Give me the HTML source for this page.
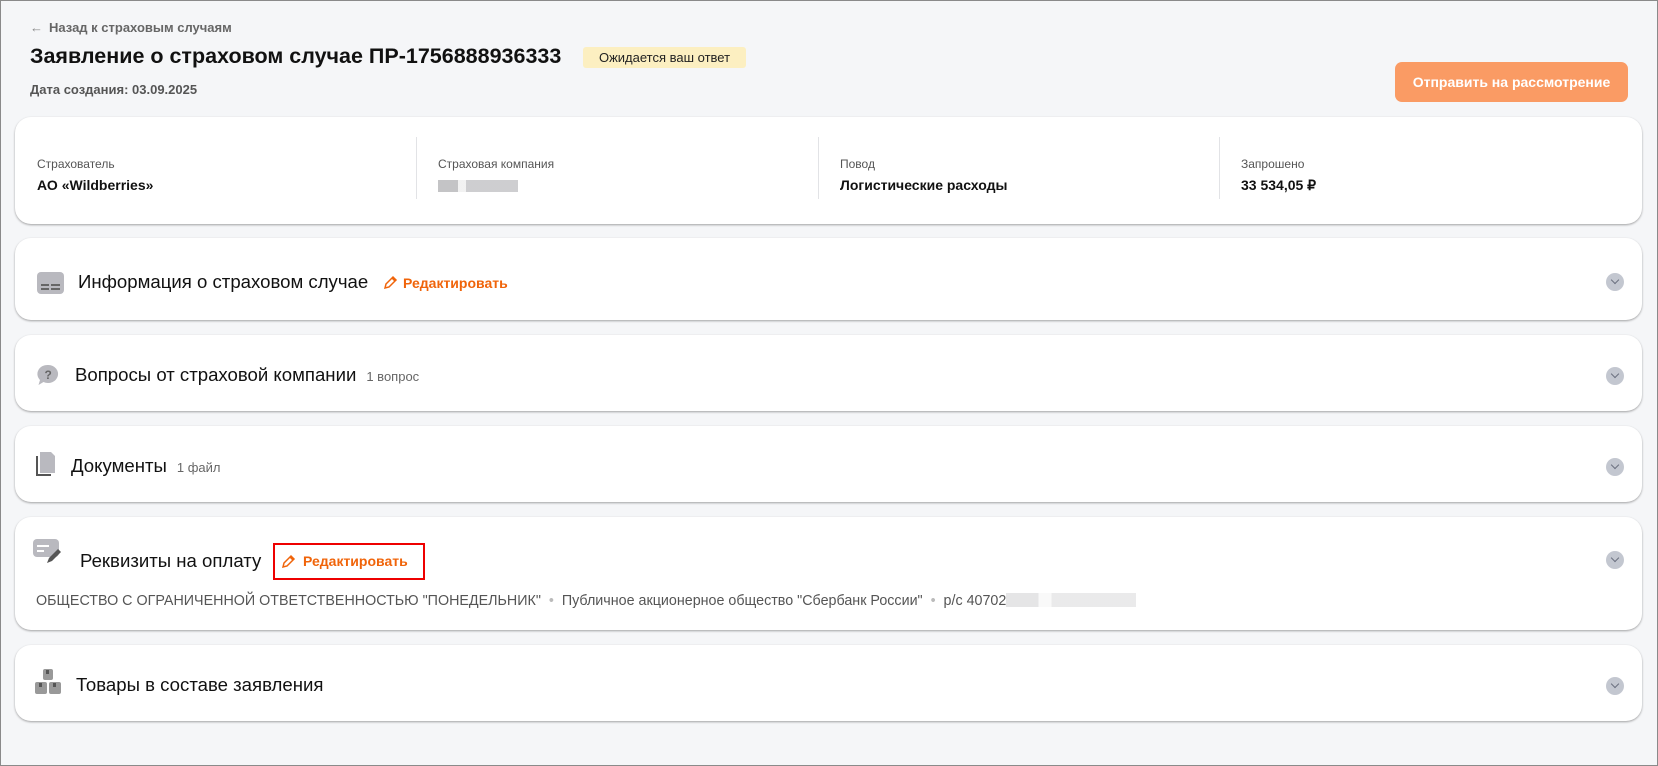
<!DOCTYPE html>
<html><head><meta charset="utf-8"><style>
*{box-sizing:border-box;margin:0;padding:0}
html,body{width:1658px;height:766px;overflow:hidden}
body{background:#f5f6f8;font-family:"Liberation Sans",sans-serif;color:#111;position:relative;border:1px solid #8a8a8a}
.abs{position:absolute}
.card{position:absolute;left:14px;width:1627px;background:#fff;border-radius:16px;box-shadow:0 1px 2px rgba(0,0,0,.35)}
.chev{position:absolute;right:18px;width:18px;height:18px;border-radius:50%;background:#c3c7d0}
.chev:after{content:"";position:absolute;left:6px;top:4px;width:5px;height:5px;border-right:1.5px solid #6b7180;border-bottom:1.5px solid #6b7180;transform:rotate(45deg)}
.st{font-size:18.6px;color:#111;position:absolute;white-space:nowrap}
.cnt{font-size:13px;color:#666;margin-left:10px}
.lbl{position:absolute;font-size:12px;color:#555;top:40px}
.val{position:absolute;font-size:14px;font-weight:bold;color:#111;top:60px}
.div{position:absolute;top:20px;width:1px;height:62px;background:#e2e3e6}
.edit{color:#f0640a;font-size:14px;font-weight:bold;position:absolute;white-space:nowrap}
.blur{display:inline-block;background:linear-gradient(90deg,#b5b5b8 0 25%,#eee 25% 35%,#c2c2c5 35% 100%);opacity:.8}
</style></head><body>
<div class="abs" style="left:29px;top:19px;font-size:13px;font-weight:bold;color:#666"><span style="color:#888;font-weight:normal;margin-right:6px">←</span>Назад к страховым случаям</div>
<div class="abs" style="left:29px;top:43px;font-size:21.5px;font-weight:bold;white-space:nowrap">Заявление о страховом случае ПР-1756888936333</div>
<div class="abs" style="left:582px;top:46px;height:21px;width:163px;background:#fcefc1;border-radius:3px;font-size:13px;line-height:21px;text-align:center;color:#222">Ожидается ваш ответ</div>
<div class="abs" style="left:29px;top:81px;font-size:13px;font-weight:bold;color:#555">Дата создания: 03.09.2025</div>
<div class="abs" style="left:1394px;top:61px;width:233px;height:40px;background:#fa9b64;border-radius:7px;color:#fff;font-size:14px;font-weight:bold;line-height:40px;text-align:center">Отправить на рассмотрение</div>

<div class="card" style="top:116px;height:107px">
 <div class="lbl" style="left:22px">Страхователь</div><div class="val" style="left:22px">АО «Wildberries»</div>
 <div class="div" style="left:401px"></div>
 <div class="lbl" style="left:423px">Страховая компания</div><div class="val" style="left:423px"><span class="blur" style="width:80px;height:12px;margin-top:3px"></span></div>
 <div class="div" style="left:803px"></div>
 <div class="lbl" style="left:825px">Повод</div><div class="val" style="left:825px">Логистические расходы</div>
 <div class="div" style="left:1204px"></div>
 <div class="lbl" style="left:1226px">Запрошено</div><div class="val" style="left:1226px">33 534,05 ₽</div>
</div>

<div class="card" style="top:237px;height:82px">
 <svg class="abs" style="left:22px;top:34px" width="27" height="22"><rect width="27" height="22" rx="4" fill="#b9b9bf"/><rect x="4" y="12" width="8" height="2" fill="#666"/><rect x="14" y="12" width="9" height="2" fill="#666"/><rect x="4" y="16" width="8" height="2" fill="#666"/><rect x="14" y="16" width="9" height="2" fill="#666"/></svg>
 <div class="st" style="left:63px;top:33px">Информация о страховом случае</div>
 <svg class="abs" style="left:368px;top:37px" width="15" height="15" fill="none" stroke="#f0640a" stroke-width="1.5"><path d="M2 13l1-4 7-7 3 3-7 7z M9 3l3 3"/></svg>
 <div class="edit" style="left:388px;top:37px">Редактировать</div>
 <div class="chev" style="top:35px"></div>
</div>

<div class="card" style="top:334px;height:76px">
 <svg class="abs" style="left:22px;top:29px" width="23" height="22"><path d="M11.5 1a10 9 0 1 1-5 17l-5 3 1.5-5A10 9 0 0 1 11.5 1z" fill="#b9b9bf"/><text x="7.5" y="15" font-size="12" font-weight="bold" fill="#666" font-family="Liberation Sans">?</text></svg>
 <div class="st" style="left:60px;top:29px">Вопросы от страховой компании<span class="cnt">1 вопрос</span></div>
 <div class="chev" style="top:32px"></div>
</div>

<div class="card" style="top:425px;height:76px">
 <svg class="abs" style="left:20px;top:25px" width="22" height="27"><path d="M5 1h11l4 4v17H5z" fill="#b9b9bf"/><path d="M2 5v19h14" fill="none" stroke="#555" stroke-width="2"/></svg>
 <div class="st" style="left:56px;top:29px">Документы<span class="cnt">1 файл</span></div>
 <div class="chev" style="top:32px"></div>
</div>

<div class="card" style="top:516px;height:113px">
 <svg class="abs" style="left:18px;top:22px" width="32" height="26"><rect x="0" y="0" width="26" height="18" rx="4" fill="#b9b9bf"/><rect x="4" y="6" width="12" height="2" fill="#fff"/><rect x="4" y="11" width="7" height="2" fill="#fff"/><path d="M14 24l2-5 9-9 3 3-9 9z" fill="#555"/></svg>
 <div class="st" style="left:65px;top:33px">Реквизиты на оплату</div>
 <div class="abs" style="left:258px;top:26px;width:152px;height:37px;border:2px solid #e00"></div>
 <svg class="abs" style="left:266px;top:37px" width="15" height="15" fill="none" stroke="#f0640a" stroke-width="1.5"><path d="M2 13l1-4 7-7 3 3-7 7z M9 3l3 3"/></svg>
 <div class="edit" style="left:288px;top:36px">Редактировать</div>
 <div class="abs" style="left:21px;top:76px;font-size:14.3px;color:#555;white-space:nowrap">ОБЩЕСТВО С ОГРАНИЧЕННОЙ ОТВЕТСТВЕННОСТЬЮ "ПОНЕДЕЛЬНИК" <span style="color:#bbb">&nbsp;•&nbsp;</span> Публичное акционерное общество "Сбербанк России" <span style="color:#bbb">&nbsp;•&nbsp;</span> р/с 40702<span class="blur" style="width:130px;height:14px;vertical-align:-2px;opacity:.35"></span></div>
 <div class="chev" style="top:34px"></div>
</div>

<div class="card" style="top:644px;height:76px">
 <svg class="abs" style="left:20px;top:24px" width="27" height="26"><rect x="8" y="0" width="10" height="11" rx="2" fill="#999"/><rect x="0" y="13" width="12" height="12" rx="2" fill="#999"/><rect x="14" y="13" width="12" height="12" rx="2" fill="#999"/><rect x="11" y="1" width="3" height="4" fill="#555"/><rect x="4" y="14" width="3" height="4" fill="#555"/><rect x="18" y="14" width="3" height="4" fill="#555"/></svg>
 <div class="st" style="left:61px;top:29px">Товары в составе заявления</div>
 <div class="chev" style="top:32px"></div>
</div>
</body></html>
